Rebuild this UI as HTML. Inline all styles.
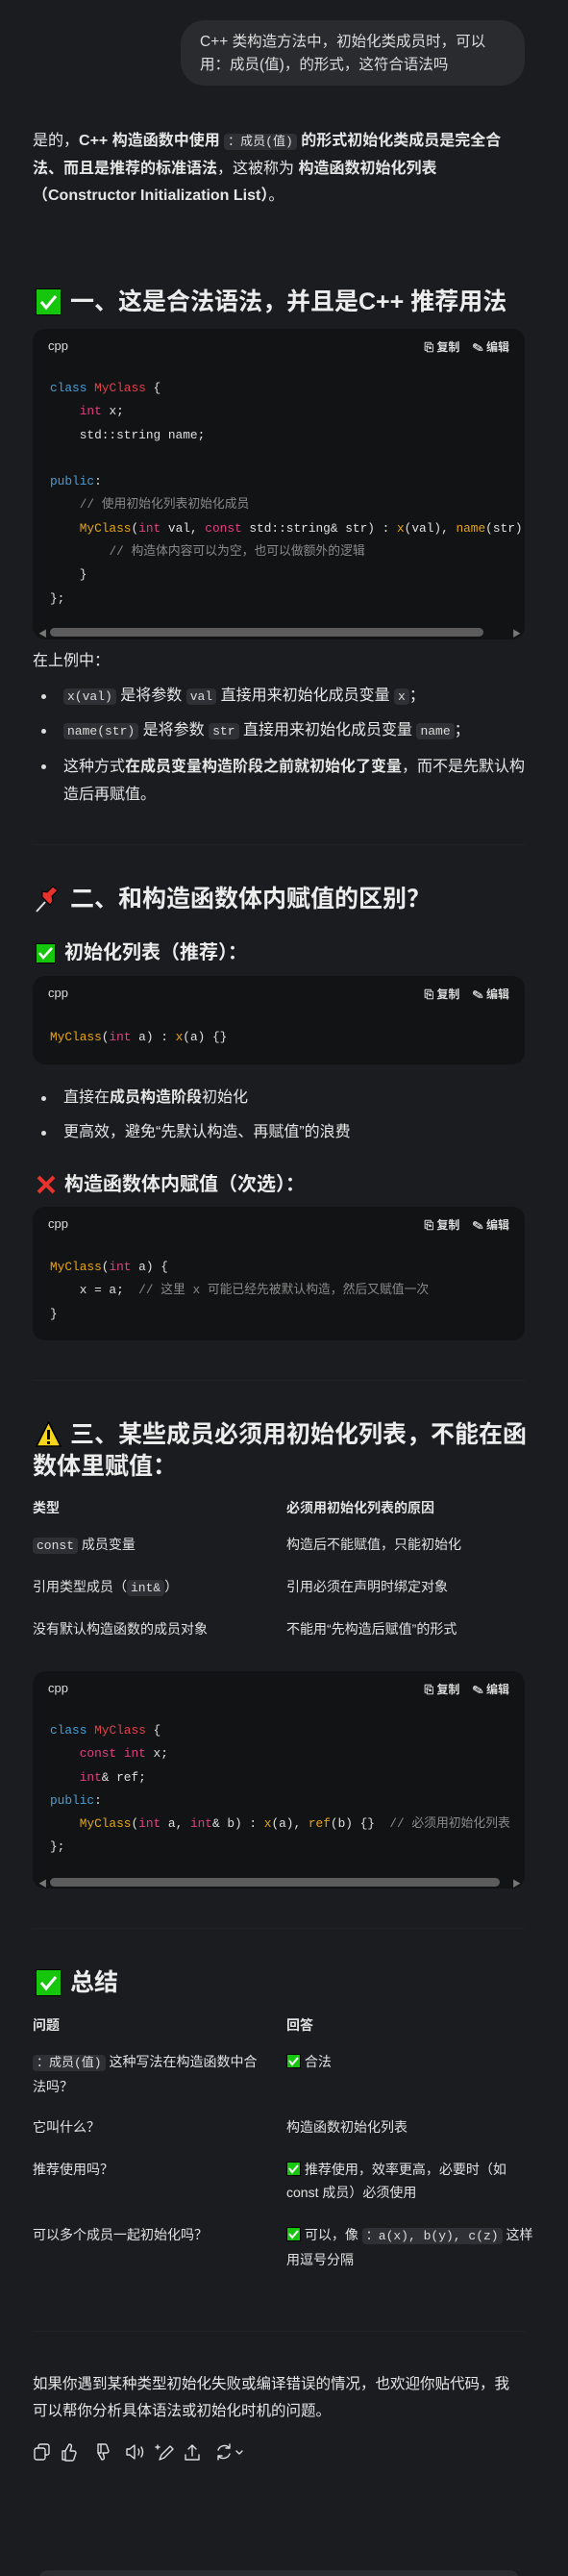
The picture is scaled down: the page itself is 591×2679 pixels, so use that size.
<!DOCTYPE html>
<html><head><meta charset="utf-8">
<style>
*{margin:0;padding:0;box-sizing:border-box}
html,body{width:591px;height:2679px;background:#1b1c1f;overflow:hidden}
body{position:relative;font-family:"Liberation Sans","Noto Sans CJK SC",sans-serif;color:#e6e6e6;font-size:16px}
.a{position:absolute;white-space:nowrap}
.b{font-weight:bold}
.ic{background:#2e3035;border-radius:4px;padding:1px 4px;font-family:"Liberation Mono","Noto Sans CJK SC",monospace;font-size:13px;color:#ddd}
.cb{position:absolute;left:34px;width:512px;background:#121314;border-radius:13px}
.cpp{position:absolute;left:16px;top:10px;font-size:13px;color:#ddd}
.act{position:absolute;right:16px;top:10px;font-size:12px;color:#ddd;font-weight:bold}
.code{position:absolute;left:0;font-family:"Liberation Mono","Noto Sans CJK SC",monospace;font-size:12.8px;color:#e0e0e0;white-space:pre;line-height:24.3px}
.k{color:#4a9ed6}.r{color:#e0404c}.p{color:#e0407c}.o{color:#e6a514}.c{color:#8a8a8a}
.hr{position:absolute;left:34px;width:512px;height:1px;background:#212226}
.h2{font-size:25px;font-weight:bold;color:#ececec}
.h3{font-size:20px;font-weight:bold;color:#ececec}
.t{font-size:14px;color:#e2e2e2}
.dot{position:absolute;left:43px;width:5px;height:5px;border-radius:50%;background:#ddd}
.sb{position:absolute;height:9px;border-radius:5px;background:#5c5c5c}
</style></head><body>

<div class="a" style="left:188px;top:21px;width:358px;height:68px;background:#2a2b2e;border-radius:25px"></div>
<div class="a" style="left:208px;top:32px;line-height:24px;font-size:15.5px;color:#ddd">C++ 类构造方法中，初始化类成员时，可以<br>用：成员(值)，的形式，这符合语法吗</div>

<div class="a" style="left:34px;top:133px;line-height:28px;font-size:16px">是的，<b>C++ 构造函数中使用 </b><span class="ic">：成员(值)</span><b> 的形式初始化类成员是完全合<br>法、而且是推荐的标准语法</b>，这被称为 <b>构造函数初始化列表<br>（Constructor Initialization List）</b>。</div>

<svg class="a" style="left:37px;top:300px" width="27" height="28" viewBox="0 0 27 28"><rect x="0.5" y="0.5" width="26" height="27" fill="#16c60c" stroke="#000"/><path d="M6 14l5 6 10-12" stroke="#fff" stroke-width="3" fill="none"/></svg>
<div class="a h2" style="left:73px;top:298px;line-height:32px">一、这是合法语法，并且是C++ 推荐用法</div>

<div class="cb" style="top:342px;height:323px">
<div class="cpp">cpp</div>
<div class="act">⎘ 复制 &nbsp;&nbsp; ✎ 编辑</div>
<div class="code" style="left:18px;top:50px"><span class="k">class</span> <span class="r">MyClass</span> {
    <span class="p">int</span> x;
    std::string name;

<span class="k">public</span>:
    <span class="c">// 使用初始化列表初始化成员</span>
    <span class="o">MyClass</span>(<span class="p">int</span> val, <span class="p">const</span> std::string&amp; str) : <span class="o">x</span>(val), <span class="o">name</span>(str)
        <span class="c">// 构造体内容可以为空，也可以做额外的逻辑</span>
    }
};</div>
<div class="sb" style="left:18px;top:311px;width:451px"></div>
<div class="a" style="left:6px;top:310px;font-size:9px;color:#777">◀</div>
<div class="a" style="left:499px;top:310px;font-size:9px;color:#777">▶</div>
</div>
<div class="a" style="left:34px;top:674px;line-height:28px">在上例中：</div>
<div class="dot" style="top:722px"></div>
<div class="a" style="left:66px;top:710px;line-height:28px"><span class="ic">x(val)</span> 是将参数 <span class="ic">val</span> 直接用来初始化成员变量 <span class="ic">x</span>；</div>
<div class="dot" style="top:758px"></div>
<div class="a" style="left:66px;top:746px;line-height:28px"><span class="ic">name(str)</span> 是将参数 <span class="ic">str</span> 直接用来初始化成员变量 <span class="ic">name</span>；</div>
<div class="dot" style="top:795px"></div>
<div class="a" style="left:66px;top:783px;line-height:29px">这种方式<b>在成员变量构造阶段之前就初始化了变量</b>，而不是先默认构<br>造后再赋值。</div>
<div class="hr" style="top:878px"></div>

<svg class="a" style="left:36px;top:921px" width="28" height="28" viewBox="0 0 28 28"><path d="M2 27l9-10" stroke="#ddd" stroke-width="2"/><path d="M8 12l8 8 3-4-1-5 6-6-5-4-6 6-5-1z" fill="#e8322e" stroke="#000" stroke-width="1"/></svg>
<div class="a h2" style="left:73px;top:919px;line-height:32px">二、和构造函数体内赋值的区别？</div>

<svg class="a" style="left:37px;top:981px" width="21" height="21" viewBox="0 0 21 21"><rect x="0.5" y="0.5" width="20" height="20" fill="#16c60c" stroke="#000"/><path d="M4 10l4 5 9-10" stroke="#fff" stroke-width="2.5" fill="none"/></svg>
<div class="a h3" style="left:67px;top:977px;line-height:28px">初始化列表（推荐）：</div>

<div class="cb" style="top:1015px;height:92px">
<div class="cpp">cpp</div>
<div class="act">⎘ 复制 &nbsp;&nbsp; ✎ 编辑</div>
<div class="code" style="left:18px;top:52px"><span class="o">MyClass</span>(<span class="p">int</span> a) : <span class="o">x</span>(a) {}</div>
</div>
<div class="dot" style="top:1140px"></div>
<div class="a" style="left:66px;top:1128px;line-height:28px">直接在<b>成员构造阶段</b>初始化</div>
<div class="dot" style="top:1176px"></div>
<div class="a" style="left:66px;top:1164px;line-height:28px">更高效，避免“先默认构造、再赋值”的浪费</div>

<svg class="a" style="left:38px;top:1222px" width="20" height="20" viewBox="0 0 20 20"><path d="M2 2l16 16M18 2L2 18" stroke="#e8322e" stroke-width="4"/></svg>
<div class="a h3" style="left:67px;top:1218px;line-height:28px">构造函数体内赋值（次选）：</div>

<div class="cb" style="top:1255px;height:139px">
<div class="cpp">cpp</div>
<div class="act">⎘ 复制 &nbsp;&nbsp; ✎ 编辑</div>
<div class="code" style="left:18px;top:51px"><span class="o">MyClass</span>(<span class="p">int</span> a) {
    x = a;  <span class="c">// 这里 x 可能已经先被默认构造，然后又赋值一次</span>
}</div>
</div>
<div class="hr" style="top:1435px"></div>

<svg class="a" style="left:37px;top:1478px" width="27" height="27" viewBox="0 0 27 27"><path d="M13.5 1L26 26H1z" fill="#f7d51d" stroke="#000" stroke-width="1.5"/><rect x="12" y="9" width="3" height="10" fill="#000"/><rect x="12" y="21" width="3" height="3" fill="#000"/></svg>
<div class="a h2" style="left:73px;top:1476px;line-height:33px">三、某些成员必须用初始化列表，不能在函</div>
<div class="a h2" style="left:34px;top:1509px;line-height:33px">数体里赋值：</div>

<div class="a t b" style="left:34px;top:1558px;line-height:20px">类型</div>
<div class="a t b" style="left:298px;top:1558px;line-height:20px">必须用初始化列表的原因</div>
<div class="a t" style="left:34px;top:1596px;line-height:20px"><span class="ic">const</span> 成员变量</div>
<div class="a t" style="left:298px;top:1596px;line-height:20px">构造后不能赋值，只能初始化</div>
<div class="a t" style="left:34px;top:1640px;line-height:20px">引用类型成员（<span class="ic">int&amp;</span>）</div>
<div class="a t" style="left:298px;top:1640px;line-height:20px">引用必须在声明时绑定对象</div>
<div class="a t" style="left:34px;top:1684px;line-height:20px">没有默认构造函数的成员对象</div>
<div class="a t" style="left:298px;top:1684px;line-height:20px">不能用“先构造后赋值”的形式</div>

<div class="cb" style="top:1738px;height:226px">
<div class="cpp">cpp</div>
<div class="act">⎘ 复制 &nbsp;&nbsp; ✎ 编辑</div>
<div class="code" style="left:18px;top:50px"><span class="k">class</span> <span class="r">MyClass</span> {
    <span class="p">const</span> <span class="p">int</span> x;
    <span class="p">int</span>&amp; ref;
<span class="k">public</span>:
    <span class="o">MyClass</span>(<span class="p">int</span> a, <span class="p">int</span>&amp; b) : <span class="o">x</span>(a), <span class="o">ref</span>(b) {}  <span class="c">// 必须用初始化列表</span>
};</div>
<div class="sb" style="left:18px;top:215px;width:468px"></div>
<div class="a" style="left:6px;top:214px;font-size:9px;color:#777">◀</div>
<div class="a" style="left:499px;top:214px;font-size:9px;color:#777">▶</div>
</div>
<div class="hr" style="top:2005px"></div>

<svg class="a" style="left:37px;top:2048px" width="27" height="28" viewBox="0 0 27 28"><rect x="0.5" y="0.5" width="26" height="27" fill="#16c60c" stroke="#000"/><path d="M6 14l5 6 10-12" stroke="#fff" stroke-width="3" fill="none"/></svg>
<div class="a h2" style="left:73px;top:2046px;line-height:32px">总结</div>

<div class="a t b" style="left:34px;top:2096px;line-height:20px">问题</div>
<div class="a t b" style="left:298px;top:2096px;line-height:20px">回答</div>
<div class="a t" style="left:34px;top:2132px;line-height:24px"><span class="ic">：成员(值)</span> 这种写法在构造函数中合<br>法吗？</div>
<div class="a t" style="left:298px;top:2134px;line-height:20px"><svg width="15" height="15" style="vertical-align:-2px" viewBox="0 0 15 15"><rect x="0.5" y="0.5" width="14" height="14" fill="#16c60c" stroke="#000"/><path d="M3 7l3 4 6-7" stroke="#fff" stroke-width="2" fill="none"/></svg> 合法</div>
<div class="a t" style="left:34px;top:2202px;line-height:20px">它叫什么？</div>
<div class="a t" style="left:298px;top:2202px;line-height:20px">构造函数初始化列表</div>
<div class="a t" style="left:34px;top:2246px;line-height:20px">推荐使用吗？</div>
<div class="a t" style="left:298px;top:2244px;line-height:24px"><svg width="15" height="15" style="vertical-align:-2px" viewBox="0 0 15 15"><rect x="0.5" y="0.5" width="14" height="14" fill="#16c60c" stroke="#000"/><path d="M3 7l3 4 6-7" stroke="#fff" stroke-width="2" fill="none"/></svg> 推荐使用，效率更高，必要时（如<br>const 成员）必须使用</div>
<div class="a t" style="left:34px;top:2314px;line-height:20px">可以多个成员一起初始化吗？</div>
<div class="a t" style="left:298px;top:2312px;line-height:24px"><svg width="15" height="15" style="vertical-align:-2px" viewBox="0 0 15 15"><rect x="0.5" y="0.5" width="14" height="14" fill="#16c60c" stroke="#000"/><path d="M3 7l3 4 6-7" stroke="#fff" stroke-width="2" fill="none"/></svg> 可以，像 <span class="ic">：a(x), b(y), c(z)</span> 这样<br>用逗号分隔</div>
<div class="hr" style="top:2424px"></div>

<div class="a" style="left:34px;top:2466px;line-height:28px;font-size:15.5px">如果你遇到某种类型初始化失败或编译错误的情况，也欢迎你贴代码，我<br>可以帮你分析具体语法或初始化时机的问题。</div>

<svg class="a" style="left:34px;top:2540px" width="230" height="20" viewBox="0 0 230 20" fill="none" stroke="#ddd" stroke-width="1.4" stroke-linecap="round" stroke-linejoin="round">
<rect x="2" y="6" width="11" height="12" rx="2"/><path d="M6 6V4a2 2 0 0 1 2-2h7a2 2 0 0 1 2 2v7a2 2 0 0 1-2 2h-2"/>
<path d="M34 9v9h-3V9zM34 9l4-7c2 0 3 1 2 4l-1 3h4a2 2 0 0 1 2 2l-2 6a2 2 0 0 1-2 2h-7"/>
<path d="M68 11V2h3v9zM68 11l4 7c2 0 3-1 2-4l-1-3h4a2 2 0 0 0 2-2l-2-6a2 2 0 0 0-2-1h-7"/>
<path d="M98 7h3l5-4v14l-5-4h-3zM110 7c1 2 1 4 0 6M113 5c2 3 2 7 0 10"/>
<path d="M132 18l2-5 9-9 3 3-9 9zM130 3v4M128 5h4"/>
<path d="M166 3v11M162 7l4-4 4 4M159 13v5h14v-5"/>
<path d="M205 6a7 7 0 0 0-12 2M193 14a7 7 0 0 0 12-2M205 2v4h-4M193 18v-4h4M212 9l3 3 3-3"/>
</svg>

<div class="a" style="left:40px;top:2673px;width:500px;height:20px;background:#2a2b2e;border-radius:14px"></div>
</body></html>
